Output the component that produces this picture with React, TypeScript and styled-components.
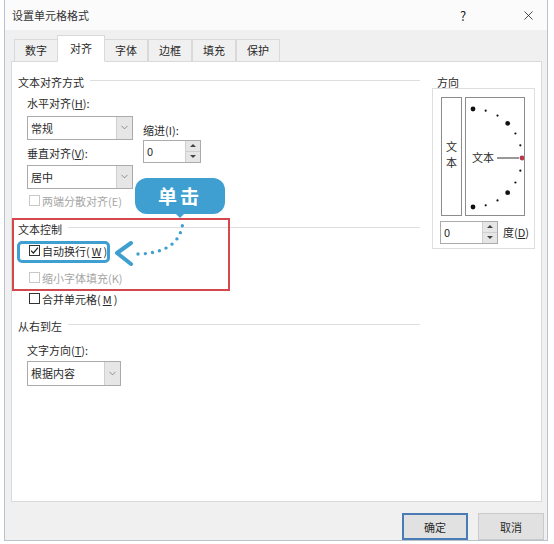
import styled, { createGlobalStyle } from 'styled-components'
import { ChevronDown, X } from 'lucide-react'

const GlobalStyle = createGlobalStyle`
  body {
    margin: 0;
    background: #ffffff;
    font-family: "Noto Sans CJK SC", "Noto Sans", sans-serif;
    font-size: 11px;
    color: #2a2a2a;
  }
`

const Window = styled.div`
  width: 542px;
  height: 540px;
  margin-left: 4px;
  border: 1px solid #b8c2cc;
  border-top: none;
  background: #f0f0f0;
  display: flex;
  flex-direction: column;
`

const TitleBar = styled.div`
  height: 30px;
  background: #fbfbfb;
  display: flex;
  align-items: center;
  padding-left: 7px;
  font-size: 11px;
  color: #333;
`

const TitleText = styled.div`
  flex: 1;
`

const TitleButton = styled.div<{ $w: number; $mr?: number }>`
  width: ${p => p.$w}px;
  margin-right: ${p => p.$mr ?? 0}px;
  height: 30px;
  display: flex;
  align-items: center;
  justify-content: center;
  font-size: 13px;
  color: #222;
`

const TabStrip = styled.div`
  height: 31px;
  display: flex;
  align-items: flex-end;
  padding-left: 9px;
`

const Tab = styled.div<{ $active?: boolean }>`
  height: ${p => (p.$active ? '25px' : '21px')};
  padding: 0 ${p => (p.$active ? '12px' : '10px')};
  margin: 0 ${p => (p.$active ? '-1px' : '0')} -1px;
  display: flex;
  align-items: center;
  justify-content: center;
  background: ${p => (p.$active ? '#ffffff' : '#f0f0f0')};
  border: 1px solid #d9d9d9;
  border-bottom: ${p => (p.$active ? '1px solid #ffffff' : '1px solid #d9d9d9')};
  position: relative;
  z-index: ${p => (p.$active ? 2 : 1)};
  & + & {
    border-left: ${p => (p.$active ? '1px solid #d9d9d9' : 'none')};
  }
`

const Panel = styled.div`
  position: relative;
  margin: 0 5px 0 6px;
  height: 431px;
  background: #ffffff;
  border: 1px solid #d9d9d9;
  display: flex;
  padding: 12px 0 0 6px;
  gap: 12px;
`

const LeftCol = styled.div`
  width: 402px;
  display: flex;
  flex-direction: column;
`

const RightCol = styled.div`
  width: 103px;
  display: flex;
  flex-direction: column;
`

const GroupHeader = styled.div<{ $mt?: number }>`
  height: 16px;
  margin-top: ${p => p.$mt ?? 0}px;
  display: flex;
  align-items: center;
  gap: 6px;
  white-space: nowrap;
  &::after {
    content: '';
    flex: 1;
    height: 1px;
    margin-top: -3px;
    background: #dedede;
  }
`

const Indent = styled.div<{ $mt?: number }>`
  padding-left: 9px;
  margin-top: ${p => p.$mt ?? 0}px;
  display: flex;
  flex-direction: column;
`

const AlignGrid = styled.div`
  display: flex;
  gap: 10px;
`

const Stack = styled.div`
  display: flex;
  flex-direction: column;
`

const Label = styled.div<{ $mt?: number; $disabled?: boolean }>`
  height: 16px;
  line-height: 16px;
  margin-top: ${p => p.$mt ?? 0}px;
  white-space: nowrap;
  color: ${p => (p.$disabled ? '#a6a6a6' : 'inherit')};
`

const Combo = styled.div<{ $w: number; $h?: number; $mt?: number }>`
  width: ${p => p.$w}px;
  height: ${p => p.$h ?? 24}px;
  margin-top: ${p => p.$mt ?? 0}px;
  box-sizing: border-box;
  border: 1px solid #ababab;
  display: flex;
  background: #fff;
`

const ComboText = styled.div`
  flex: 1;
  display: flex;
  align-items: center;
  padding-left: 3px;
`

const DropButton = styled.div`
  width: 15px;
  background: #e6e6e6;
  border-left: 1px solid #cfcfcf;
  display: flex;
  align-items: center;
  justify-content: center;
  color: #666;
`

const Spin = styled.div<{ $mt?: number }>`
  width: 58px;
  height: 23px;
  margin-top: ${p => p.$mt ?? 0}px;
  box-sizing: border-box;
  border: 1px solid #ababab;
  display: flex;
  background: #fff;
`

const SpinButtons = styled.div`
  width: 14px;
  display: flex;
  flex-direction: column;
  border-left: 1px solid #cfcfcf;
`

const SpinHalf = styled.div<{ $down?: boolean }>`
  flex: 1;
  background: #e6e6e6;
  display: flex;
  align-items: center;
  justify-content: center;
  border-top: ${p => (p.$down ? '1px solid #cfcfcf' : 'none')};
  &::before {
    content: '';
    border-left: 3px solid transparent;
    border-right: 3px solid transparent;
    ${p => (p.$down ? 'border-top: 3px solid #444;' : 'border-bottom: 3px solid #444;')}
  }
`

const CheckRow = styled.div<{ $mt?: number; $disabled?: boolean }>`
  height: 16px;
  margin-top: ${p => p.$mt ?? 0}px;
  padding-left: 2px;
  display: flex;
  align-items: center;
  gap: 2px;
  white-space: nowrap;
  color: ${p => (p.$disabled ? '#a6a6a6' : 'inherit')};
`

const CheckBox = styled.div<{ $disabled?: boolean }>`
  width: 11px;
  height: 11px;
  box-sizing: border-box;
  border: 1px solid ${p => (p.$disabled ? '#c8c8c8' : '#333')};
  display: flex;
  align-items: center;
  justify-content: center;
  background: #fff;
`

const DirLabel = styled.div`
  height: 16px;
  line-height: 16px;
  padding-left: 5px;
`

const DirBox = styled.div`
  margin-top: -2px;
  height: 161px;
  box-sizing: border-box;
  border: 1px solid #dedede;
  padding: 8px 0 0 8px;
  display: flex;
  flex-direction: column;
`

const DirRow = styled.div`
  display: flex;
  gap: 3px;
`

const VertText = styled.div`
  width: 21px;
  height: 119px;
  box-sizing: border-box;
  border: 1px solid #8c8c8c;
  display: flex;
  flex-direction: column;
  align-items: center;
  justify-content: center;
  line-height: 16px;
  padding-bottom: 4px;
`

const Dial = styled.div`
  width: 60px;
  height: 119px;
  box-sizing: border-box;
  border: 1px solid #8c8c8c;
`

const DegreeRow = styled.div`
  margin: 5px 0 0 -1px;
  display: flex;
  align-items: center;
  gap: 5px;
`

const Footer = styled.div`
  flex: 1;
  display: flex;
  justify-content: flex-end;
  align-items: flex-start;
  padding: 11px 3px 0 0;
  gap: 10px;
`

const Button = styled.div<{ $primary?: boolean }>`
  width: 66px;
  height: 27px;
  box-sizing: border-box;
  background: #e1e1e1;
  border: ${p => (p.$primary ? '2px solid #4a7bb5' : '1px solid #cacaca')};
  display: flex;
  align-items: center;
  justify-content: center;
`

const RedFrame = styled.div`
  position: absolute;
  left: 0;
  top: 156px;
  width: 218px;
  height: 73px;
  box-sizing: border-box;
  border: 2px solid #d4474d;
  pointer-events: none;
`

const BlueHighlight = styled.div`
  position: absolute;
  left: 5px;
  top: 179px;
  width: 93px;
  height: 22px;
  box-sizing: border-box;
  border: 3px solid #3f9fd0;
  border-radius: 5px;
`

const Bubble = styled.div`
  position: absolute;
  left: 123px;
  top: 116px;
  width: 90px;
  height: 36px;
  border-radius: 12px;
  background: #3f9fd0;
  color: #ffffff;
  font-size: 19px;
  font-weight: 700;
  letter-spacing: 3px;
  display: flex;
  align-items: center;
  justify-content: center;
  &::after {
    content: '';
    position: absolute;
    left: 41px;
    bottom: -4px;
    border-left: 4px solid transparent;
    border-right: 4px solid transparent;
    border-top: 4px solid #3f9fd0;
  }
`

const ArrowLayer = styled.svg`
  position: absolute;
  left: 98px;
  top: 143px;
`

const Acc = ({ k }: { k: string }) => (
  <>
    (<u>{k}</u>)
  </>
)

const Check = () => (
  <svg width="9" height="9" viewBox="0 0 9 9">
    <path d="M1 4.6 L3.4 7 L8 1.6" fill="none" stroke="#222" strokeWidth="1.2" />
  </svg>
)

const DialDrawing = () => {
  const cx = 7
  const cy = 60
  const r = 49
  const dots = []
  for (let a = -90; a <= 90; a += 15) {
    if (a === 0) continue
    const rad = (a * Math.PI) / 180
    const big = a % 45 === 0
    dots.push(
      <circle
        key={a}
        cx={cx + r * Math.cos(rad)}
        cy={cy - r * Math.sin(rad)}
        r={big ? 2.4 : 1.1}
        fill="#111"
      />
    )
  }
  return (
    <svg width="58" height="117" viewBox="0 0 58 117">
      {dots}
      <text x="6" y="64" fontSize="11" fill="#2a2a2a" fontFamily='"Noto Sans CJK SC", sans-serif'>
        文本
      </text>
      <line x1="31" y1="60" x2="53" y2="60" stroke="#333" strokeWidth="1" />
      <circle cx={cx + r} cy={cy} r="2.4" fill="#b5394a" />
    </svg>
  )
}

export default function App() {
  return (
    <>
      <GlobalStyle />
      <Window>
        <TitleBar>
          <TitleText>设置单元格格式</TitleText>
          <TitleButton $w={30} $mr={32}>?</TitleButton>
          <TitleButton $w={36} $mr={1}>
            <X size={15} strokeWidth={1.3} />
          </TitleButton>
        </TitleBar>
        <TabStrip>
          <Tab>数字</Tab>
          <Tab $active>对齐</Tab>
          <Tab>字体</Tab>
          <Tab>边框</Tab>
          <Tab>填充</Tab>
          <Tab>保护</Tab>
        </TabStrip>
        <Panel>
          <LeftCol>
            <GroupHeader>文本对齐方式</GroupHeader>
            <Indent $mt={5}>
              <AlignGrid>
                <Stack>
                  <Label>
                    水平对齐<Acc k="H" />:
                  </Label>
                  <Combo $w={106} $mt={5}>
                    <ComboText>常规</ComboText>
                    <DropButton>
                      <ChevronDown size={11} strokeWidth={1.5} />
                    </DropButton>
                  </Combo>
                  <Label $mt={5}>
                    垂直对齐<Acc k="V" />:
                  </Label>
                  <Combo $w={106} $mt={4}>
                    <ComboText>居中</ComboText>
                    <DropButton>
                      <ChevronDown size={11} strokeWidth={1.5} />
                    </DropButton>
                  </Combo>
                </Stack>
                <Stack>
                  <Label $mt={27}>缩进(I):</Label>
                  <Spin $mt={2}>
                    <ComboText>0</ComboText>
                    <SpinButtons>
                      <SpinHalf />
                      <SpinHalf $down />
                    </SpinButtons>
                  </Spin>
                </Stack>
              </AlignGrid>
              <CheckRow $mt={4} $disabled>
                <CheckBox $disabled />
                两端分散对齐(E)
              </CheckRow>
            </Indent>
            <GroupHeader $mt={12}>文本控制</GroupHeader>
            <Indent>
              <CheckRow $mt={6}>
                <CheckBox>
                  <Check />
                </CheckBox>
                自动换行<Acc k="W" />
              </CheckRow>
              <CheckRow $mt={11} $disabled>
                <CheckBox $disabled />
                缩小字体填充(K)
              </CheckRow>
              <CheckRow $mt={5}>
                <CheckBox />
                合并单元格<Acc k="M" />
              </CheckRow>
            </Indent>
            <GroupHeader $mt={11}>从右到左</GroupHeader>
            <Indent>
              <Label $mt={8}>
                文字方向<Acc k="T" />:
              </Label>
              <Combo $w={94} $h={25} $mt={3}>
                <ComboText>根据内容</ComboText>
                <DropButton>
                  <ChevronDown size={11} strokeWidth={1.5} />
                </DropButton>
              </Combo>
            </Indent>
          </LeftCol>
          <RightCol>
            <DirLabel>方向</DirLabel>
            <DirBox>
              <DirRow>
                <VertText>
                  <span>文</span>
                  <span>本</span>
                </VertText>
                <Dial>
                  <DialDrawing />
                </Dial>
              </DirRow>
              <DegreeRow>
                <Spin>
                  <ComboText>0</ComboText>
                  <SpinButtons>
                    <SpinHalf />
                    <SpinHalf $down />
                  </SpinButtons>
                </Spin>
                <span>
                  度<Acc k="D" />
                </span>
              </DegreeRow>
            </DirBox>
          </RightCol>

          <RedFrame />
          <BlueHighlight />
          <Bubble>单击</Bubble>
          <ArrowLayer width="84" height="70" viewBox="0 0 84 70">
            <path
              d="M28 49 Q72 48 73 14"
              fill="none"
              stroke="#3f9fd0"
              strokeWidth="3.4"
              strokeLinecap="round"
              strokeDasharray="0 7.2"
            />
            <path
              d="M21 38 L7 48 L21 59"
              fill="none"
              stroke="#3f9fd0"
              strokeWidth="4"
              strokeLinecap="round"
              strokeLinejoin="round"
            />
          </ArrowLayer>
        </Panel>
        <Footer>
          <Button $primary>确定</Button>
          <Button>取消</Button>
        </Footer>
      </Window>
    </>
  )
}
